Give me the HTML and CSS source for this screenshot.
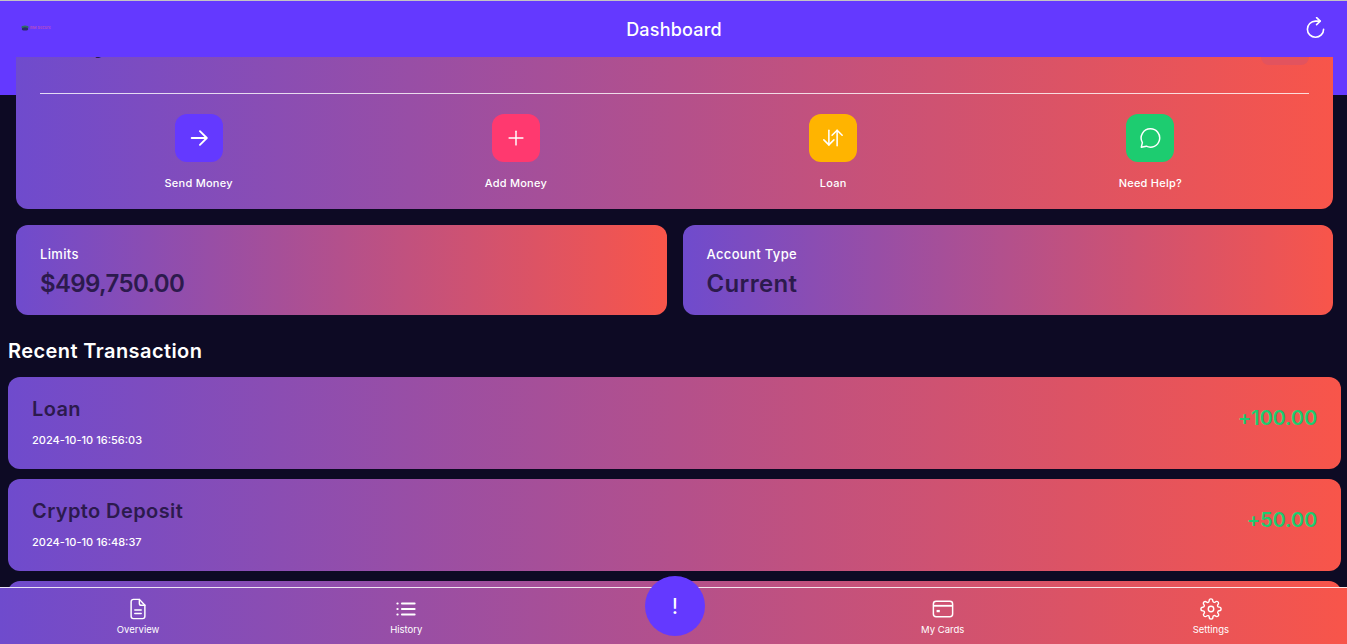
FILE: index.html
```html
<!DOCTYPE html>
<html lang="en">
<head>
<meta charset="utf-8">
<title>Dashboard</title>
<link rel="stylesheet" href="styles.css">
</head>
<body>
<div class="app">
  <header class="topbar">
    <div class="logo">
      <svg class="logo-mark" viewBox="0 0 10 7"><ellipse cx="5" cy="2.4" rx="4.5" ry="2" fill="#2e6f63"/><ellipse cx="5" cy="4.6" rx="4" ry="2" fill="#2b2a6b"/></svg>
      <span class="logo-text">BM Secure</span>
    </div>
    <h1 class="title">Dashboard</h1>
    <svg class="refresh" viewBox="0 0 24 24" fill="none" stroke="#fff" stroke-width="1.6" stroke-linecap="round" stroke-linejoin="round">
      <path d="M19.6 12.2a8.1 8.1 0 1 1-8.1-8.1h4.6"/><path d="M12.6 0.6l3.6 3.5-3.6 3.5"/>
    </svg>
  </header>

  <main class="content">
    <section class="hero">
      <div class="balance-card gradient">
        <div class="balance-row">
          <span class="balance">$ Pay</span>
          <span class="pill"></span>
        </div>
        <hr class="rule">
        <div class="actions">
          <div class="action">
            <span class="tile tile-violet">
              <svg viewBox="0 0 24 24" fill="none" stroke="#fff" stroke-width="2" stroke-linecap="round" stroke-linejoin="round"><path d="M4 12h16"/><path d="M13 4.5l7.5 7.5-7.5 7.5"/></svg>
            </span>
            <span class="action-label">Send Money</span>
          </div>
          <div class="action">
            <span class="tile tile-pink">
              <svg viewBox="0 0 24 24" fill="none" stroke="#fff" stroke-width="1.6" stroke-linecap="round"><path d="M12 4.5v15"/><path d="M4.5 12h15"/></svg>
            </span>
            <span class="action-label">Add Money</span>
          </div>
          <div class="action">
            <span class="tile tile-amber">
              <svg viewBox="0 0 24 24" fill="none" stroke="#fff" stroke-width="1.7" stroke-linecap="round" stroke-linejoin="round"><path d="M7.5 3.5v16"/><path d="M2 14l5.5 5.5L13 14"/><path d="M16.5 20.500v-17"/><path d="M11 9l5.500-5.500L22 9"/></svg>
            </span>
            <span class="action-label">Loan</span>
          </div>
          <div class="action">
            <span class="tile tile-green">
              <svg viewBox="0 0 24 24" fill="none" stroke="#fff" stroke-width="1.6" stroke-linejoin="round"><path d="M12.500 2a10 10 0 1 1-4.500 18.900L2.500 22l1.200-5A10 10 0 0 1 12.500 2z"/></svg>
            </span>
            <span class="action-label">Need Help?</span>
          </div>
        </div>
      </div>
    </section>

    <section class="stats">
      <div class="stat gradient">
        <span class="stat-label">Limits</span>
        <span class="stat-value stat-number">$499,750.00</span>
      </div>
      <div class="stat gradient">
        <span class="stat-label">Account Type</span>
        <span class="stat-value">Current</span>
      </div>
    </section>

    <h2 class="section-title">Recent Transaction</h2>

    <section class="tx-list">
      <article class="tx gradient">
        <div class="tx-main">
          <span class="tx-name">Loan</span>
          <span class="tx-date">2024-10-10 16:56:03</span>
        </div>
        <span class="tx-amount">+100.00</span>
      </article>
      <article class="tx gradient">
        <div class="tx-main">
          <span class="tx-name">Crypto Deposit</span>
          <span class="tx-date">2024-10-10 16:48:37</span>
        </div>
        <span class="tx-amount">+50.00</span>
      </article>
      <article class="tx gradient"></article>
    </section>
  </main>

  <nav class="bottom-nav gradient">
    <div class="nav-item">
      <svg viewBox="0 0 24 24" fill="none" stroke="#fff" stroke-width="1.6" stroke-linecap="round" stroke-linejoin="round"><path d="M13.500 1.500H7a2.500 2.500 0 0 0-2.500 2.500v16A2.500 2.500 0 0 0 7 22.500h10a2.500 2.500 0 0 0 2.500-2.500V8z"/><path d="M13.500 1.500V6a2 2 0 0 0 2 2h4"/><path d="M8.500 13h7"/><path d="M8.500 17h7"/></svg>
      <span>Overview</span>
    </div>
    <div class="nav-item">
      <svg viewBox="0 0 24 24" fill="none" stroke="#fff" stroke-width="2" stroke-linecap="round"><path d="M7.500 6h14"/><path d="M7.500 12h14"/><path d="M7.500 18h14"/><path d="M2.500 6h.5"/><path d="M2.500 12h.5"/><path d="M2.500 18h.5"/></svg>
      <span>History</span>
    </div>
    <div class="nav-item nav-spacer"><span class="fab">!</span></div>
    <div class="nav-item">
      <svg viewBox="0 0 24 24" fill="none" stroke="#fff" stroke-width="1.6" stroke-linejoin="round"><rect x="1.500" y="3.500" width="21" height="17" rx="3"/><path d="M1.500 8.500h21" stroke-width="2"/><rect x="5" y="13" width="3.500" height="2.500" fill="#fff" stroke="none"/></svg>
      <span>My Cards</span>
    </div>
    <div class="nav-item">
      <svg viewBox="0 0 24 24" fill="none" stroke="#fff" stroke-width="1.5" stroke-linecap="round" stroke-linejoin="round"><circle cx="12" cy="12" r="3"/><path d="M19.400 15a1.650 1.650 0 0 0 .33 1.820l.06.06a2 2 0 1 1-2.830 2.830l-.06-.06a1.650 1.650 0 0 0-2.820 1.170V21a2 2 0 1 1-4 0v-.09A1.650 1.650 0 0 0 7.260 19.700l-.06.06a2 2 0 1 1-2.830-2.830l.06-.06a1.650 1.650 0 0 0-1.170-2.820H3a2 2 0 1 1 0-4h.09A1.650 1.650 0 0 0 4.300 7.260l-.06-.06a2 2 0 1 1 2.830-2.830l.06.06a1.650 1.650 0 0 0 2.820-1.170V3a2 2 0 1 1 4 0v.09a1.650 1.650 0 0 0 2.790 1.210l.06-.06a2 2 0 1 1 2.830 2.830l-.06.06a1.650 1.650 0 0 0 1.170 2.820H21a2 2 0 1 1 0 4h-.09a1.650 1.650 0 0 0-1.510 1.050z"/></svg>
      <span>Settings</span>
    </div>
  </nav>
</div>
</body>
</html>
```

FILE: styles.css
```css
* { box-sizing: border-box; }

html, body { margin: 0; height: 100%; }

body {
  background: #0d0a24;
  font-family: Inter, "Open Sans", "Liberation Sans", sans-serif;
  color: #fff;
  overflow: hidden;
}

.app {
  position: relative;
  height: 644px;
  overflow: hidden;
  display: flex;
  flex-direction: column;
}

.gradient { background: linear-gradient(to right, #6f4bcd, #f8554a); }

/* top bar */
.topbar {
  position: relative;
  z-index: 3;
  flex: none;
  height: 57px;
  background: #6439ff;
  border-top: 1px solid #c4c4c4;
  display: flex;
  align-items: center;
  justify-content: center;
}

.title {
  margin: 0 0 0 1px;
  font-size: 18px;
  font-weight: 500;
  letter-spacing: 0.2px;
}

.logo {
  position: absolute;
  left: 21px;
  top: 24px;
  display: flex;
  align-items: center;
  gap: 1px;
}

.logo-mark { width: 8px; height: 6px; }

.logo-text {
  font-size: 4px;
  font-weight: 500;
  line-height: 6px;
  color: #c04fc0;
}

.refresh {
  position: absolute;
  right: 19px;
  top: 16px;
  width: 24px;
  height: 24px;
}

/* scrolled content */
.content {
  flex: none;
  display: flex;
  flex-direction: column;
}

.hero {
  background: linear-gradient(#6439ff 38px, transparent 38px);
  padding: 0 14px 16px 16px;
}

.balance-card {
  height: 152px;
  border-radius: 0 0 12px 12px;
  padding: 0 24px;
  display: flex;
  flex-direction: column;
}

.balance-row {
  height: 36px;
  display: flex;
  justify-content: space-between;
  align-items: flex-start;
  overflow: visible;
}

.balance {
  margin-top: -24px;
  font-size: 24px;
  line-height: 24px;
  font-weight: 600;
  letter-spacing: 1px;
  color: #2c1a4d;
}

.pill {
  width: 48px;
  height: 8px;
  border-radius: 0 0 10px 10px;
  background: #e2535e;
}

.rule {
  margin: 0;
  border: 0;
  height: 1px;
  background: rgba(255, 255, 255, 0.8);
}

.actions {
  display: grid;
  grid-template-columns: repeat(4, 1fr);
  padding-top: 20px;
}

.action {
  display: flex;
  flex-direction: column;
  align-items: center;
  gap: 13px;
}

.tile {
  width: 48px;
  height: 48px;
  border-radius: 12px;
  display: flex;
  align-items: center;
  justify-content: center;
}

.tile svg { width: 22px; height: 22px; }

.tile-violet { background: #6439ff; }
.tile-pink { background: #ff396f; }
.tile-amber { background: #ffb400; }
.tile-green { background: #1dcc70; }

.action-label {
  font-size: 11px;
  line-height: 16px;
  font-weight: 500;
  letter-spacing: 0.25px;
}

/* stat cards */
.stats {
  display: grid;
  grid-template-columns: 1fr 1fr;
  gap: 16px;
  padding: 0 14px 0 16px;
}

.stat {
  height: 90px;
  border-radius: 12px;
  padding: 20px 24px 0;
  display: flex;
  flex-direction: column;
}

.stat-label {
  font-size: 13px;
  line-height: 18px;
  font-weight: 500;
  letter-spacing: 0.35px;
}

.stat-value {
  margin-top: 5px;
  font-size: 24px;
  line-height: 32px;
  font-weight: 600;
  letter-spacing: 0.35px;
  color: #2c1a4d;
}

.stat-number { letter-spacing: -0.65px; }

.section-title {
  margin: 24px 0 14px 8px;
  font-size: 20px;
  line-height: 24px;
  font-weight: 600;
  letter-spacing: 0.42px;
  color: #fff;
}

/* transactions */
.tx-list {
  display: flex;
  flex-direction: column;
  gap: 10px;
  padding: 0 6px 0 8px;
}

.tx {
  height: 92px;
  flex: none;
  border-radius: 12px;
  padding: 0 24px;
  display: flex;
  align-items: center;
  justify-content: space-between;
}

.tx-main {
  display: flex;
  flex-direction: column;
  gap: 9px;
  margin-bottom: 4px;
}

.tx-name {
  font-size: 20px;
  line-height: 28px;
  font-weight: 600;
  letter-spacing: 0.4px;
  color: #2c1a4d;
}

.tx-date {
  font-size: 11px;
  line-height: 16px;
  font-weight: 500;
  letter-spacing: 0;
}

.tx-amount {
  margin-bottom: 10px;
  font-size: 20px;
  font-weight: 600;
  letter-spacing: -0.1px;
  color: #1dcc70;
}

/* bottom nav */
.bottom-nav {
  position: absolute;
  z-index: 4;
  left: 0;
  right: 0;
  bottom: 0;
  height: 57px;
  border-top: 1px solid rgba(255, 255, 255, 0.85);
  padding: 0 2px 0 4px;
  display: grid;
  grid-template-columns: repeat(5, 1fr);
}

.nav-item {
  position: relative;
  display: flex;
  flex-direction: column;
  align-items: center;
  padding-top: 10px;
  font-size: 9.500px;
  line-height: 14px;
  font-weight: 400;
  letter-spacing: 0;
}

.nav-item svg { width: 22px; height: 22px; margin-bottom: 3px; }

.fab {
  position: absolute;
  top: -12px;
  left: 50%;
  margin-left: -29.500px;
  width: 60px;
  height: 60px;
  border-radius: 50%;
  background: #6439ff;
  display: flex;
  align-items: center;
  justify-content: center;
  font-size: 22px;
  font-weight: 400;
}
```
